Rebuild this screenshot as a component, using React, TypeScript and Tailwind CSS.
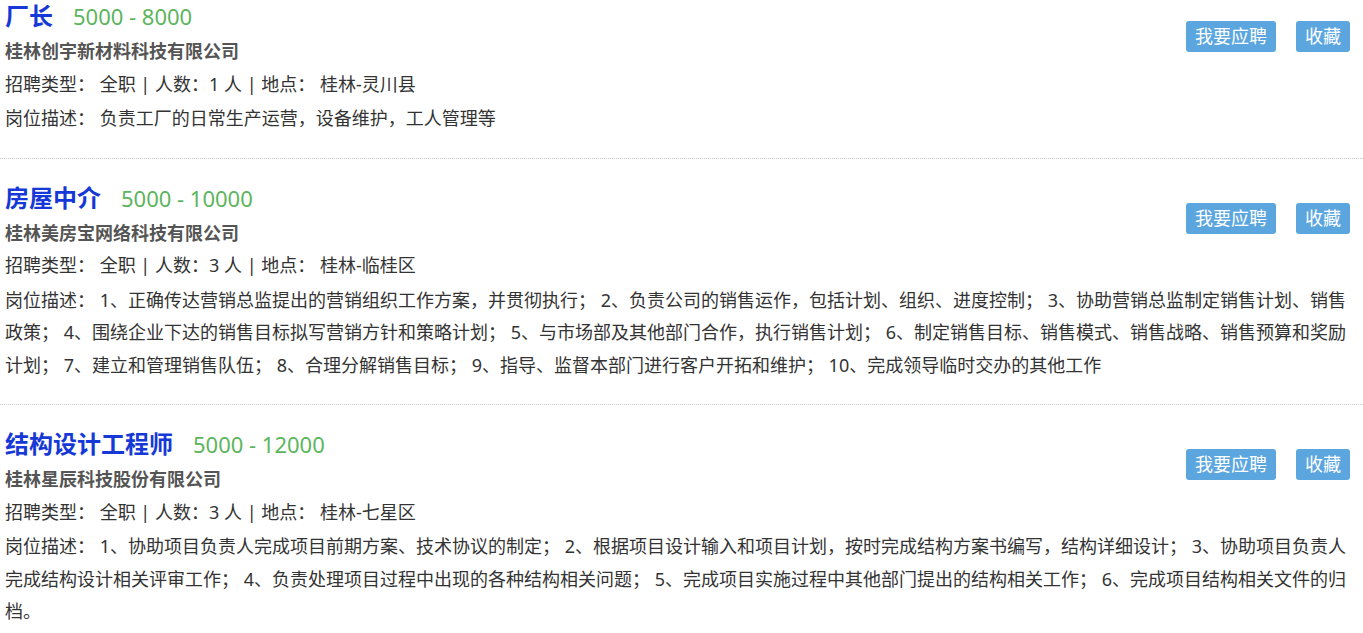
import React from "react";

type Job = {
  title: string;
  salary: string;
  company: string;
  count: string;
  place: string;
  desc: string;
};

const jobs: Job[] = [
  {
    title: "厂长",
    salary: "5000 - 8000",
    company: "桂林创宇新材料科技有限公司",
    count: "1",
    place: "桂林-灵川县",
    desc: "负责工厂的日常生产运营，设备维护，工人管理等",
  },
  {
    title: "房屋中介",
    salary: "5000 - 10000",
    company: "桂林美房宝网络科技有限公司",
    count: "3",
    place: "桂林-临桂区",
    desc: "1、正确传达营销总监提出的营销组织工作方案，并贯彻执行； 2、负责公司的销售运作，包括计划、组织、进度控制； 3、协助营销总监制定销售计划、销售政策； 4、围绕企业下达的销售目标拟写营销方针和策略计划； 5、与市场部及其他部门合作，执行销售计划； 6、制定销售目标、销售模式、销售战略、销售预算和奖励计划； 7、建立和管理销售队伍； 8、合理分解销售目标； 9、指导、监督本部门进行客户开拓和维护； 10、完成领导临时交办的其他工作",
  },
  {
    title: "结构设计工程师",
    salary: "5000 - 12000",
    company: "桂林星辰科技股份有限公司",
    count: "3",
    place: "桂林-七星区",
    desc: "1、协助项目负责人完成项目前期方案、技术协议的制定； 2、根据项目设计输入和项目计划，按时完成结构方案书编写，结构详细设计； 3、协助项目负责人完成结构设计相关评审工作； 4、负责处理项目过程中出现的各种结构相关问题； 5、完成项目实施过程中其他部门提出的结构相关工作； 6、完成项目结构相关文件的归档。",
  },
];

const font = { fontFamily: '"Noto Sans", "Noto Sans CJK SC", sans-serif' };

export default function App() {
  return (
    <div className="min-h-screen bg-white overflow-hidden" style={font}>
      <div className="-mt-[23px]">
        {jobs.map((j, i) => (
          <div
            key={i}
            className="pl-[5px] pr-[13px] pt-[20px] pb-[23px] border-b border-dotted border-[#c8c8c8] text-[18px] leading-[32.5px] text-[#333]"
          >
            <div className="float-right mt-[24px] flex gap-[20px]">
              <button className="h-[31px] px-[9px] rounded-[3px] bg-[#5ca6e0] text-white text-[18px] leading-[31px]">
                我要应聘
              </button>
              <button className="h-[31px] px-[9px] rounded-[3px] bg-[#5ca6e0] text-white text-[18px] leading-[31px]">
                收藏
              </button>
            </div>
            <div className="flex h-[38px] items-center">
              <span className="text-[24px] leading-[38px] font-bold text-[#1538d6]">{j.title}</span>
              <span className="ml-[20px] text-[22px] leading-[38px] text-[#5cb55c]">{j.salary}</span>
            </div>
            <div className="font-bold text-[#555]">{j.company}</div>
            <div className="mb-[2px]">
              招聘类型： 全职 | 人数：{j.count} 人 | 地点： {j.place}
            </div>
            <div>岗位描述： {j.desc}</div>
          </div>
        ))}
      </div>
    </div>
  );
}
